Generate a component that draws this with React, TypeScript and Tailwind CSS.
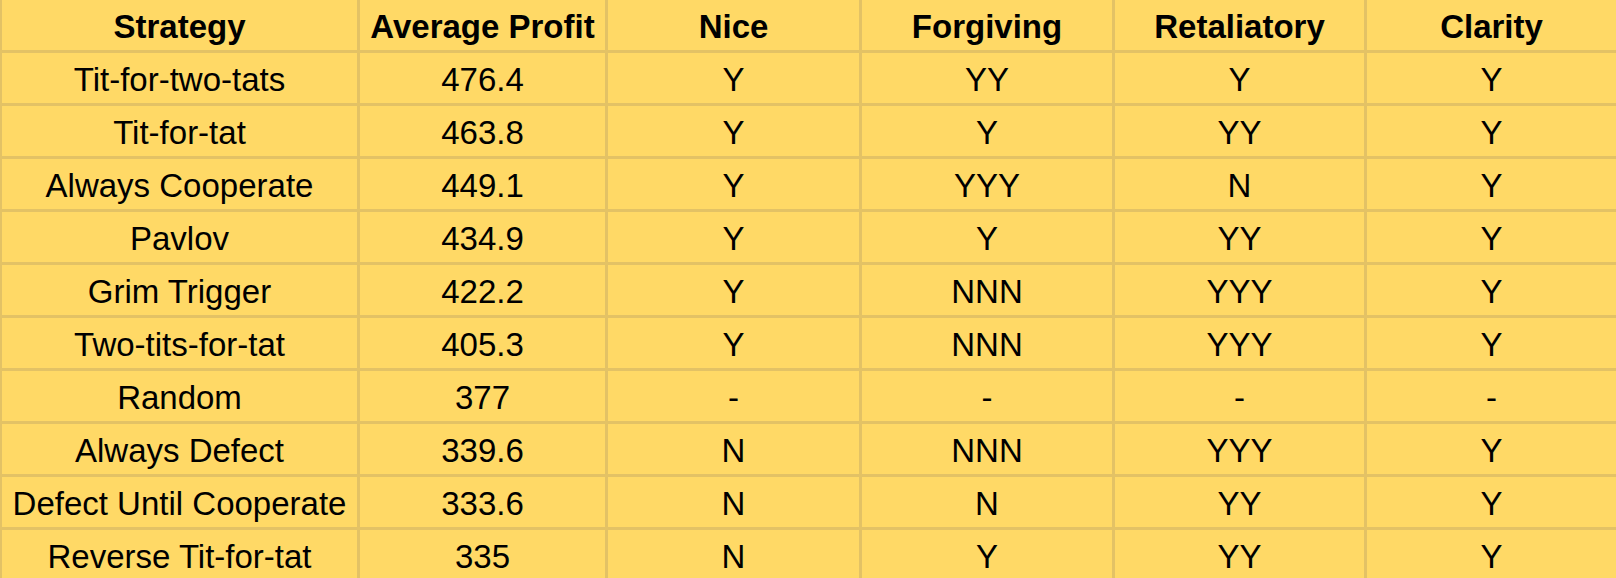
import React from 'react';

type Row = [string, string, string, string, string, string];

const header: Row = ['Strategy', 'Average Profit', 'Nice', 'Forgiving', 'Retaliatory', 'Clarity'];

const rows: Row[] = [
  ['Tit-for-two-tats', '476.4', 'Y', 'YY', 'Y', 'Y'],
  ['Tit-for-tat', '463.8', 'Y', 'Y', 'YY', 'Y'],
  ['Always Cooperate', '449.1', 'Y', 'YYY', 'N', 'Y'],
  ['Pavlov', '434.9', 'Y', 'Y', 'YY', 'Y'],
  ['Grim Trigger', '422.2', 'Y', 'NNN', 'YYY', 'Y'],
  ['Two-tits-for-tat', '405.3', 'Y', 'NNN', 'YYY', 'Y'],
  ['Random', '377', '-', '-', '-', '-'],
  ['Always Defect', '339.6', 'N', 'NNN', 'YYY', 'Y'],
  ['Defect Until Cooperate', '333.6', 'N', 'N', 'YY', 'Y'],
  ['Reverse Tit-for-tat', '335', 'N', 'Y', 'YY', 'Y'],
];

export default function App() {
  return (
    <div
      className="w-[1616px] h-[578px] overflow-hidden bg-[#e3c265] pl-[2px]"
      style={{ fontFamily: '"Liberation Sans", Arial, sans-serif' }}
    >
      <div className="grid grid-cols-[355px_245px_251px_250px_249px_249px] gap-[3px] text-[33px] text-black">
        {header.map((h) => (
          <div
            key={h}
            className="h-[50px] bg-[#ffd966] flex items-center justify-center pt-[3px] font-bold leading-none whitespace-nowrap"
          >
            {h}
          </div>
        ))}
        {rows.map((r) =>
          r.map((cell, i) => (
            <div
              key={r[0] + i}
              className="h-[50px] bg-[#ffd966] flex items-center justify-center pt-[2px] leading-none whitespace-nowrap"
            >
              {cell}
            </div>
          ))
        )}
      </div>
    </div>
  );
}
